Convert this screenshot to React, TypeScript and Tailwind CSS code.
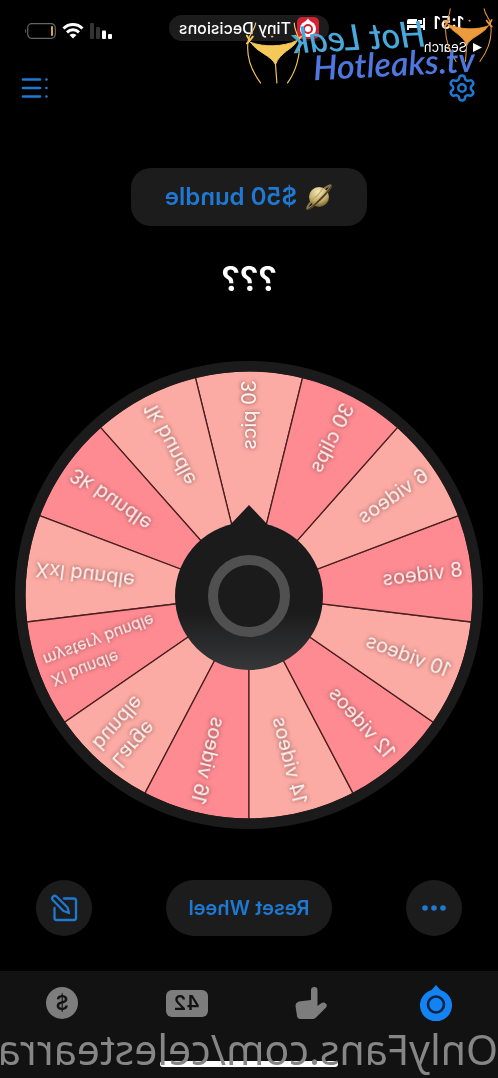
import { Settings } from "lucide-react";

interface Segment {
  lines: string[];
  dark?: boolean;
  small?: boolean;
}

const SEGMENTS: Segment[] = [
  { lines: ["30 pics"] },
  { lines: ["1k bundle"] },
  { lines: ["3k bundle"], dark: true },
  { lines: ["Xxl bundle"] },
  { lines: ["Xl bundle", "mystery bundle"], dark: true, small: true },
  { lines: ["Large", "bundle"] },
  { lines: ["16 videos"], dark: true },
  { lines: ["14 videos"] },
  { lines: ["12 videos"], dark: true },
  { lines: ["10 videos"] },
  { lines: ["8 videos"], dark: true },
  { lines: ["6 videos"] },
  { lines: ["30 clips"], dark: true },
];

const STEP = 360 / SEGMENTS.length;
const RADIUS = 224;

const pointAt = (deg: number) => {
  const rad = (deg * Math.PI) / 180;
  return `${RADIUS * Math.cos(rad)} ${RADIUS * Math.sin(rad)}`;
};

function Wheel() {
  return (
    <svg viewBox="-234 -234 468 468" className="block w-full" role="img" aria-label="Wheel">
      <defs>
        <linearGradient id="hub" x1="0" y1="0" x2="0" y2="1">
          <stop offset="0.6" stopColor="#1b1b1c" />
          <stop offset="1" stopColor="#363738" />
        </linearGradient>
      </defs>
      <circle r="234" fill="#1b1b1b" />
      {SEGMENTS.map((segment, i) => {
        const mid = -90 + i * STEP;
        return (
          <path
            key={i}
            d={`M0 0L${pointAt(mid - STEP / 2)}A${RADIUS} ${RADIUS} 0 0 1 ${pointAt(mid + STEP / 2)}Z`}
            fill={segment.dark ? "#fe8b92" : "#fbaba3"}
            stroke="#4a1f1f"
            strokeWidth="1.3"
          />
        );
      })}
      <circle r="225" fill="none" stroke="#1b1b1b" strokeWidth="3" />
      {SEGMENTS.map((segment, i) => {
        const size = segment.small ? 16 : 20;
        const lineHeight = segment.small ? 22 : 26;
        const first = size * 0.35 - ((segment.lines.length - 1) * lineHeight) / 2;
        return (
          <g
            key={i}
            transform={`rotate(${90 + i * STEP})`}
            fill="#fff5f3"
            fontSize={size}
            className="drop-shadow-[0_0_2px_rgba(70,20,20,0.7)]"
          >
            {segment.lines.map((line, n) => (
              <text key={line} x="-215" y={first + n * lineHeight}>
                {line}
              </text>
            ))}
          </g>
        );
      })}
      <path d="M0 -90L19 -70H-19Z" fill="#1b1b1c" />
      <circle cy="1" r="74" fill="url(#hub)" />
      <circle cy="1" r="36" fill="#1b1b1c" stroke="#505050" strokeWidth="10" />
    </svg>
  );
}

function Planet() {
  return (
    <svg viewBox="0 0 28 28" className="size-7" aria-hidden="true">
      <defs>
        <radialGradient id="planet" cx="0.35" cy="0.3" r="0.8">
          <stop offset="0" stopColor="#f4e9b4" />
          <stop offset="0.6" stopColor="#c5ae6b" />
          <stop offset="1" stopColor="#5c4a20" />
        </radialGradient>
      </defs>
      <g transform="rotate(45 14 14)">
        <ellipse cx="14" cy="14" rx="16.5" ry="2.6" fill="none" stroke="#8a764a" strokeWidth="2" />
        <circle cx="14" cy="14" r="10" fill="url(#planet)" />
        <path d="M5 10.5Q14 13 23 10.5" fill="none" stroke="#b8a468" strokeWidth="1" />
        <path d="M-2.5 14C-1 17.5 29 17.5 30.5 14" fill="none" stroke="#4f4222" strokeWidth="2" />
        <path d="M-2.5 13.5C-1 16 29 16 30.5 13.5" fill="none" stroke="#a8945c" strokeWidth="0.8" />
      </g>
    </svg>
  );
}

function Bikini({ className, color }: { className: string; color: string }) {
  return (
    <svg viewBox="0 0 58 66" className={className} fill="none" stroke={color} strokeLinecap="round" aria-hidden="true">
      <path d="M5 21C18 26 38 26 53 19C49 28 35 31 30.5 44C26 34 12 32 5 21Z" fill={color} strokeWidth="1" />
      <path
        d="M10 1C9 8 4 12 2.500 18C0 32 4 48 15 63M50 1C50 8 54 13 55 20C57 34 51 52 43 63M30.500 43L32 63"
        strokeWidth="1.2"
      />
      <path d="M4 19L1 14M4 19L1 22M4 19L7 15M54 18L51 14M54 18L57 15M54 18L57 22" strokeWidth="2" />
      <circle cx="27" cy="15" r="0.7" fill={color} />
    </svg>
  );
}

function StatusBar() {
  return (
    <header className="grid h-14 grid-cols-[1fr_auto_1fr] items-start px-4 pt-[15px]">
      <div>
        <div className="flex h-[18px] items-center gap-2 pl-[18px] text-[17px] font-semibold">
          1:51
          <svg viewBox="0 0 18 12" className="h-3 w-[18px]" fill="#fff" aria-hidden="true">
            <path d="M0 0H2V7H18V12H16V10H2V12H0ZM3 2H7V6H3ZM8 1H16Q18 1 18 3V6H8Z" />
          </svg>
        </div>
        <a href="#" className="mt-1.5 flex items-center gap-1.5 text-[13px] leading-4">
          <svg viewBox="0 0 9 9" className="size-[9px]" fill="#fff" aria-hidden="true">
            <path d="M0 4.5L9 0V9Z" />
          </svg>
          Search
        </a>
      </div>
      <div className="flex h-[26px] items-center gap-1.5 rounded-full bg-[#1c1c1d] px-2.5 text-base font-medium">
        <svg viewBox="0 0 22 24" className="h-6 w-[22px]" aria-hidden="true">
          <rect y="1" width="22" height="22" rx="5" fill="#d32131" />
          <circle cx="11" cy="13" r="8" fill="#fff" />
          <path d="M11 2.500L14 6H8Z" fill="#fff" />
          <circle cx="11" cy="13" r="4" fill="#fff" stroke="#d32131" strokeWidth="2" />
        </svg>
        Tiny Decisions
      </div>
      <div className="flex h-8 items-center justify-end gap-1.5 pr-2">
        <svg viewBox="0 0 22 16" className="h-4 w-[22px]" fill="#fff" aria-hidden="true">
          <rect y="11" width="4" height="5" rx="1" />
          <rect x="6" y="7.500" width="4" height="8.500" rx="1" />
          <rect x="12" y="4" width="4" height="12" rx="1" fill="#333" />
          <rect x="18" width="4" height="16" rx="1" fill="#333" />
        </svg>
        <svg viewBox="0 0 22 16" className="h-4 w-[22px]" fill="none" stroke="#fff" strokeWidth="3" aria-hidden="true">
          <path d="M1.500 5.500C7 0.300 15 0.300 20.500 5.500M5 9.300C8.500 6 13.500 6 17 9.300" />
          <path d="M11 15.500L7.500 12Q11 9.500 14.500 12Z" fill="#fff" stroke="none" />
        </svg>
        <svg viewBox="0 0 32 16" className="h-4 w-8" fill="none" aria-hidden="true">
          <rect x="0.700" y="0.700" width="27.600" height="14.600" rx="4" stroke="#66665f" strokeWidth="1.200" />
          <rect x="3" y="3" width="2" height="10" rx="1" fill="#d9a650" />
          <path d="M30 5.500Q32 8 30 10.500Z" fill="#66665f" />
        </svg>
      </div>
    </header>
  );
}

function TabBar() {
  return (
    <nav className="relative mt-auto h-[107px] bg-[#121212]">
      <div className="grid grid-cols-4 pt-3.5 text-[#7d7d7d]">
        <button aria-label="Wheel" className="flex h-9 items-center justify-center">
          <svg viewBox="0 0 34 36" className="h-9 w-[34px]" aria-hidden="true">
            <path d="M17 0L21.500 5A16 16 0 1 1 12.500 5Z" fill="#1283f1" />
            <circle cx="17" cy="19.500" r="8" fill="#1283f1" stroke="#0b2342" strokeWidth="2.600" />
          </svg>
        </button>
        <button aria-label="Finger" className="flex h-9 items-center justify-center">
          <svg viewBox="0 0 32 34" className="h-[34px] w-8" fill="currentColor" aria-hidden="true">
            <path d="M9.500 4.200Q9.500 1 12.700 1T16 4.200V14L28 15.500Q31.500 16.500 31.500 20L30 30Q29.500 33 26.500 33H14Q12 33 10.500 31L1 21.500Q-0.500 19.500 1 17.800Q3 15.500 5.500 17L9.500 20Z" />
          </svg>
        </button>
        <button aria-label="Number" className="flex h-9 items-center justify-center">
          <span className="rounded-md bg-[#7d7d7d] px-2 text-xl leading-[27px] font-semibold text-[#121212]">42</span>
        </button>
        <button aria-label="Coin" className="flex h-9 items-center justify-center">
          <span className="size-8 rounded-full bg-[#7d7d7d] text-xl leading-8 font-semibold text-[#121212]">$</span>
        </button>
      </div>
      <div className="absolute bottom-[11px] left-1/2 h-1.5 w-[178px] -translate-x-1/2 rounded-full bg-white" />
      <p className="absolute inset-x-0 bottom-0.5 overflow-hidden font-['Noto_Sans'] text-[41px] leading-[54px] whitespace-nowrap text-[#868686]">
        OnlyFans.com/celestearra
      </p>
    </nav>
  );
}

export default function App() {
  return (
    <div className="relative flex min-h-screen -scale-x-100 flex-col overflow-hidden bg-black font-['Inter','Liberation_Sans',sans-serif] text-white">
      <StatusBar />

      <div className="flex h-12 items-center justify-between px-[21px] pt-4 text-[#1f78d1]">
        <button aria-label="Settings">
          <Settings className="size-[30px]" strokeWidth={2} />
        </button>
        <button aria-label="Menu">
          <svg viewBox="0 0 28 20" className="h-5 w-7" stroke="currentColor" strokeWidth="2.600" strokeLinecap="round" aria-hidden="true">
            <path d="M2.500 1.500H2.600M2.500 10H2.600M2.500 18.500H2.600M9 1.500H26M9 10H26M9 18.500H26" />
          </svg>
        </button>
      </div>

      <button className="mx-auto mt-16 flex h-[58px] items-center gap-2 rounded-[20px] bg-[#1c1c1d] px-[34px] text-2xl font-semibold text-[#1f78d1]">
        <Planet />
        $50 bundle
      </button>
      <h1 className="mt-8 text-center text-[34px] leading-[42px] font-semibold">???</h1>

      <main className="mt-[61px] px-[15px]">
        <Wheel />
      </main>

      <div className="mt-[51px] mb-[35px] flex items-center justify-between px-9 text-[#1f78d1]">
        <button aria-label="More" className="flex size-14 items-center justify-center rounded-full bg-[#1c1c1d]">
          <svg viewBox="0 0 24 6" className="h-1.5 w-6" fill="currentColor" aria-hidden="true">
            <circle cx="3" cy="3" r="2.800" />
            <circle cx="12" cy="3" r="2.800" />
            <circle cx="21" cy="3" r="2.800" />
          </svg>
        </button>
        <button className="h-14 rounded-full bg-[#1c1c1d] px-[22px] text-xl font-semibold">Reset Wheel</button>
        <button aria-label="Edit" className="flex size-14 items-center justify-center rounded-full bg-[#1c1c1d]">
          <svg viewBox="0 0 28 28" className="size-7" fill="none" stroke="currentColor" strokeWidth="2.300" strokeLinecap="round" strokeLinejoin="round" aria-hidden="true">
            <path d="M14 4.500H4Q2 4.500 2 6.500V24Q2 26 4 26H21.500Q23.500 26 23.500 24V14" />
            <path d="M9 19L10.500 13.500L21.500 2.500Q23.200 1 25 2.700T25.200 6L14.500 17Z" />
          </svg>
        </button>
      </div>

      <TabBar />

      {/* watermarks */}
      <div className="pointer-events-none absolute inset-x-0 top-0 h-28" aria-hidden="true">
        <Bikini className="absolute top-2 left-[5px] h-14 w-[50px]" color="#eb9a3c" />
        <Bikini className="absolute top-[22px] left-[196px] h-16 w-14 -scale-x-100" color="#f4c95a" />
        <span className="absolute top-4 left-[73px] rotate-3 font-['Lato'] text-4xl leading-10 font-medium whitespace-nowrap text-[#48a9dc] italic">
          Hot Leak
        </span>
        <span className="absolute top-[43px] left-[23px] -scale-x-100 rotate-3 font-['Lato'] text-[34px] leading-10 font-semibold whitespace-nowrap text-[#4e78e0] italic">
          Hotleaks.tv
        </span>
      </div>
    </div>
  );
}
